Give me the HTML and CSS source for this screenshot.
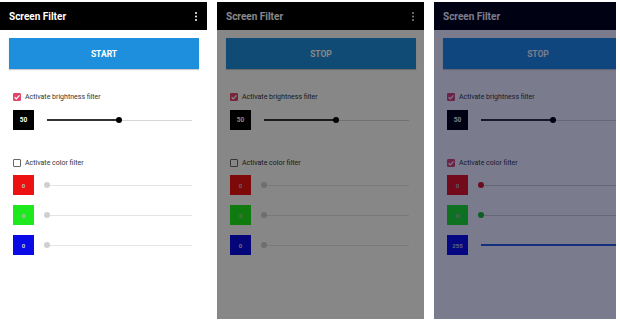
FILE: index.html
```html
<!DOCTYPE html>
<html lang="en">
<head>
    <meta charset="UTF-8">
    <meta name="viewport" content="width=device-width, initial-scale=1.0">
    <title>Screen Filter</title>
    <link rel="stylesheet" href="styles.css">
</head>
<body>
    <div class="shots">
        <!-- 1: filter off -->
        <div class="phone">
            <div class="bar">
                <span>Screen Filter</span>
                <svg class="more" width="2" height="9" viewBox="0 0 2 9"><circle cx="1" cy="1" r="1"/><circle cx="1" cy="4.5" r="1"/><circle cx="1" cy="8" r="1"/></svg>
            </div>
            <div class="content">
                <div class="btn">START</div>
                <div class="check first">
                    <span class="box on"><svg width="8" height="8" viewBox="0 0 8 8"><polyline points="1.6,4.2 3.3,5.8 6.5,2.4"/></svg></span>
                    Activate brightness filter
                </div>
                <div class="row">
                    <div class="value black">50</div>
                    <div class="slider dark">
                        <div class="fill" style="width:72px"></div>
                        <div class="thumb"></div>
                        <div class="rest"></div>
                    </div>
                </div>
                <div class="check second">
                    <span class="box"></span>
                    Activate color filter
                </div>
                <div class="row">
                    <div class="value red">0</div>
                    <div class="slider grey">
                        <div class="fill" style="width:0"></div>
                        <div class="thumb"></div>
                        <div class="rest"></div>
                    </div>
                </div>
                <div class="row">
                    <div class="value green">0</div>
                    <div class="slider grey">
                        <div class="fill" style="width:0"></div>
                        <div class="thumb"></div>
                        <div class="rest"></div>
                    </div>
                </div>
                <div class="row">
                    <div class="value blue">0</div>
                    <div class="slider grey">
                        <div class="fill" style="width:0"></div>
                        <div class="thumb"></div>
                        <div class="rest"></div>
                    </div>
                </div>
            </div>
        </div>

        <!-- 2: brightness filter on -->
        <div class="phone">
            <div class="bar">
                <span>Screen Filter</span>
                <svg class="more" width="2" height="9" viewBox="0 0 2 9"><circle cx="1" cy="1" r="1"/><circle cx="1" cy="4.5" r="1"/><circle cx="1" cy="8" r="1"/></svg>
            </div>
            <div class="content">
                <div class="btn">STOP</div>
                <div class="check first">
                    <span class="box on"><svg width="8" height="8" viewBox="0 0 8 8"><polyline points="1.6,4.2 3.3,5.8 6.5,2.4"/></svg></span>
                    Activate brightness filter
                </div>
                <div class="row">
                    <div class="value black">50</div>
                    <div class="slider dark">
                        <div class="fill" style="width:72px"></div>
                        <div class="thumb"></div>
                        <div class="rest"></div>
                    </div>
                </div>
                <div class="check second">
                    <span class="box"></span>
                    Activate color filter
                </div>
                <div class="row">
                    <div class="value red">0</div>
                    <div class="slider grey">
                        <div class="fill" style="width:0"></div>
                        <div class="thumb"></div>
                        <div class="rest"></div>
                    </div>
                </div>
                <div class="row">
                    <div class="value green">0</div>
                    <div class="slider grey">
                        <div class="fill" style="width:0"></div>
                        <div class="thumb"></div>
                        <div class="rest"></div>
                    </div>
                </div>
                <div class="row">
                    <div class="value blue">0</div>
                    <div class="slider grey">
                        <div class="fill" style="width:0"></div>
                        <div class="thumb"></div>
                        <div class="rest"></div>
                    </div>
                </div>
            </div>
            <div class="overlay dim"></div>
        </div>

        <!-- 3: brightness + blue filter -->
        <div class="phone cut">
            <div class="bar">
                <span>Screen Filter</span>
                <svg class="more" width="2" height="9" viewBox="0 0 2 9"><circle cx="1" cy="1" r="1"/><circle cx="1" cy="4.5" r="1"/><circle cx="1" cy="8" r="1"/></svg>
            </div>
            <div class="content">
                <div class="btn">STOP</div>
                <div class="check first">
                    <span class="box on"><svg width="8" height="8" viewBox="0 0 8 8"><polyline points="1.6,4.2 3.3,5.8 6.5,2.4"/></svg></span>
                    Activate brightness filter
                </div>
                <div class="row">
                    <div class="value black">50</div>
                    <div class="slider dark">
                        <div class="fill" style="width:72px"></div>
                        <div class="thumb"></div>
                        <div class="rest"></div>
                    </div>
                </div>
                <div class="check second">
                    <span class="box on"><svg width="8" height="8" viewBox="0 0 8 8"><polyline points="1.6,4.2 3.3,5.8 6.5,2.4"/></svg></span>
                    Activate color filter
                </div>
                <div class="row">
                    <div class="value red">0</div>
                    <div class="slider c-red">
                        <div class="fill" style="width:0"></div>
                        <div class="thumb"></div>
                        <div class="rest"></div>
                    </div>
                </div>
                <div class="row">
                    <div class="value green">0</div>
                    <div class="slider c-green">
                        <div class="fill" style="width:0"></div>
                        <div class="thumb"></div>
                        <div class="rest"></div>
                    </div>
                </div>
                <div class="row">
                    <div class="value blue">255</div>
                    <div class="slider c-blue">
                        <div class="fill" style="width:145px"></div>
                        <div class="thumb"></div>
                        <div class="rest"></div>
                    </div>
                </div>
            </div>
            <div class="overlay tint"></div>
        </div>
    </div>
</body>
</html>
```

FILE: styles.css
```css
* {
    margin: 0;
    padding: 0;
    box-sizing: border-box;
}

body {
    background: #fff;
    font-family: Roboto, "Noto Sans", sans-serif;
}

.shots {
    display: flex;
    gap: 10px;
    padding-top: 2px;
}

.phone {
    position: relative;
    flex: none;
    width: 207px;
    height: 317px;
    background: #fff;
    overflow: hidden;
}

.phone.cut {
    width: 182px;
}

.bar {
    width: 207px;
    height: 28px;
    background: #000;
    color: #fff;
    font-size: 10px;
    font-weight: bold;
    display: flex;
    align-items: center;
    justify-content: space-between;
    padding: 0 10px 0 9px;
}

.more {
    fill: #fff;
}

.content {
    width: 207px;
    padding: 8px 8px 0 9px;
}

.btn {
    height: 31px;
    background: #1e8fdc;
    color: #fff;
    font-size: 8.5px;
    font-weight: bold;
    display: flex;
    align-items: center;
    justify-content: center;
    box-shadow: 0 1px 1px rgba(0, 0, 0, 0.2);
}

.check {
    display: flex;
    align-items: center;
    gap: 4px;
    height: 8px;
    padding-left: 4px;
    font-size: 7px;
    color: #333;
}

.check.first {
    margin-top: 24px;
}

.check.second {
    margin-top: 29px;
    margin-bottom: -1px;
}

.box {
    width: 8px;
    height: 8px;
    border: 1px solid #666;
    border-radius: 1px;
    display: flex;
}

.box.on {
    background: #e0456a;
    border-color: #e0456a;
}

.box svg {
    margin: -1px;
    fill: none;
    stroke: #fff;
    stroke-width: 1.2;
}

.row {
    display: flex;
    align-items: center;
    margin-top: 9px;
    padding-left: 4px;
}

.row + .row {
    margin-top: 10px;
}

.value {
    width: 21px;
    height: 20px;
    display: flex;
    align-items: center;
    justify-content: center;
    font-size: 6px;
    font-weight: bold;
    color: #bbb;
}

.value.black {
    background: #000;
    color: #fff;
    font-size: 6.5px;
}

.value.red { background: #ee1111; }
.value.green { background: #1ee81e; }
.value.blue { background: #0a0ae6; color: #ccc; }

.slider {
    display: flex;
    align-items: center;
    width: 145px;
    margin-left: 13px;
    height: 8px;
}

.fill {
    height: 1.5px;
    background: #333;
}

.rest {
    flex: 1;
    height: 1px;
    background: #d6d6d6;
}

.thumb {
    position: relative;
    flex: none;
    width: 6px;
    height: 6px;
    margin: 0 -3px;
    border-radius: 50%;
    background: #000;
}

.slider.grey .thumb { background: #d0d0d0; }
.slider.grey .rest { background: #e4e4e4; }

.slider.c-red .thumb { background: #e01515; }
.slider.c-green .thumb { background: #1bc21b; }
.slider.c-blue .fill { background: #2b5fd8; }
.slider.c-blue .thumb { background: #2b5fd8; }

.overlay {
    position: absolute;
    top: 0;
    left: 0;
    right: 0;
    bottom: 0;
}

.overlay.dim {
    background: rgba(0, 0, 0, 0.47);
}

.overlay.tint {
    background: rgba(0, 4, 38, 0.52);
}
```
